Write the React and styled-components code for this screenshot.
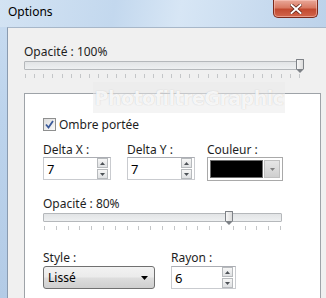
import React from 'react'
import styled, { createGlobalStyle } from 'styled-components'

const GlobalStyle = createGlobalStyle`
    body {
        margin: 0;
        background: #ffffff;
        font-family: "Noto Sans", "Open Sans", sans-serif;
        font-size: 12px;
        color: #1e1e1e;
    }
`

const Window = styled.div`
    position: relative;
    width: 326px;
    height: 298px;
    overflow: hidden;
    display: flex;
    flex-direction: column;
    background: linear-gradient(180deg, #c9dcf0 0%, #bcd3ec 40%, #b3cbe6 100%);
`

const TitleBar = styled.div`
    height: 27px;
    flex: none;
    display: flex;
    align-items: flex-start;
    justify-content: space-between;
    background: linear-gradient(100deg, #d3e3f3 0%, #c3d8ee 35%, #d7e6f5 55%, #bcd2ea 100%);
`

const Title = styled.span`
    padding: 4px 0 0 8px;
    font-size: 12px;
    line-height: 16px;
    color: #000;
`

const CloseButton = styled.div`
    width: 43px;
    height: 17px;
    margin-right: 8px;
    display: flex;
    align-items: center;
    justify-content: center;
    border: 1px solid #7b2a1c;
    border-top: none;
    border-radius: 0 0 5px 5px;
    background: linear-gradient(180deg, #e9a899 0%, #d97a63 45%, #c24a30 55%, #d2664c 100%);
    box-shadow: inset 0 0 0 1px rgba(255, 210, 200, 0.5);
`

const Frame = styled.div`
    flex: 1;
    display: flex;
    padding: 0 8px 0 7px;
`

const Client = styled.div`
    flex: 1;
    border-left: 1px solid #8a9bb0;
    border-top: 1px solid #a7b7c9;
    border-right: 1px solid #a7b7c9;
    background: #f0f0f0;
    padding: 16px 14px 0 16px;
    display: flex;
    flex-direction: column;
`

const Label = styled.div`
    font-size: 12px;
    line-height: 15px;
    height: 15px;
    color: #1e1e1e;
    white-space: nowrap;
    margin-top: ${(p) => p.$top || 0}px;
`

const SliderWrap = styled.div`
    position: relative;
    flex: none;
    width: ${(p) => p.$width}px;
    height: 22px;
`

const Track = styled.div`
    margin-top: 2px;
    height: 7px;
    border: 1px solid #b5b8bb;
    border-radius: 1px;
    background: linear-gradient(180deg, #e2e4e6 0%, #eef0f1 100%);
`

const Thumb = styled.div`
    position: absolute;
    top: 0;
    width: 6px;
    height: 9px;
    border: 1px solid #7e8287;
    border-bottom: none;
    border-radius: 1px 1px 0 0;
    background: linear-gradient(90deg, #f7f7f7, #dcdcdc);
    &::after {
        content: '';
        position: absolute;
        left: -1px;
        bottom: -4px;
        border-left: 4px solid transparent;
        border-right: 4px solid transparent;
        border-top: 4px solid #7e8287;
    }
`

const Ticks = styled.div`
    display: flex;
    justify-content: space-between;
    margin-top: 4px;
    padding: 0 1px;
`

const Tick = styled.span`
    width: 1px;
    height: 4px;
    background: #c4c6c8;
`

const Panel = styled.div`
    margin-top: 12px;
    width: 277px;
    flex: 1;
    border: 1px solid #9ea3a8;
    border-bottom: none;
    background: #ffffff;
    padding: 23px 0 0 18px;
    display: flex;
    flex-direction: column;
`

const CheckRow = styled.label`
    display: flex;
    align-items: center;
    gap: 3px;
    height: 14px;
`

const Box = styled.span`
    width: 11px;
    height: 11px;
    border: 1px solid #8e8f8f;
    background: linear-gradient(135deg, #dcdcdc, #fbfbfb);
    display: flex;
    align-items: center;
    justify-content: center;
`

const FieldRow = styled.div`
    display: flex;
    gap: ${(p) => p.$gap}px;
    margin-top: ${(p) => p.$top}px;
`

const Field = styled.div`
    display: flex;
    flex-direction: column;
    gap: ${(p) => p.$gap || 0}px;
    margin-left: ${(p) => p.$shift || 0}px;
`

const SpinBox = styled.div`
    width: ${(p) => p.$width}px;
    height: 23px;
    box-sizing: border-box;
    border: 1px solid #c9cbcf;
    border-top-color: #abadb3;
    background: #fff;
    display: flex;
    align-items: center;
    justify-content: space-between;
    padding: 0 2px 0 3px;
`

const SpinValue = styled.span`
    font-size: 13px;
    color: #000;
`

const SpinButtons = styled.div`
    display: flex;
    flex-direction: column;
    gap: 1px;
`

const SpinButton = styled.span`
    width: 9px;
    height: 8px;
    border: 1px solid #b7babd;
    background: linear-gradient(180deg, #f6f6f6, #dfe1e3);
    display: flex;
    align-items: center;
    justify-content: center;
`

const ColorPicker = styled.div`
    width: 76px;
    height: 24px;
    box-sizing: border-box;
    border: 1px solid #a9a9a9;
    padding: 2px;
    background: #fff;
    display: flex;
    gap: 1px;
`

const Swatch = styled.div`
    flex: 1;
    background: #000;
    border: 1px solid #6d6d6d;
`

const ColorArrow = styled.div`
    width: 14px;
    background: linear-gradient(180deg, #e6e6e6, #cfcfcf);
    border: 1px solid #c0c0c0;
    display: flex;
    align-items: center;
    justify-content: center;
`

const Select = styled.div`
    width: 112px;
    height: 23px;
    box-sizing: border-box;
    border: 1px solid #707070;
    border-radius: 3px;
    background: linear-gradient(180deg, #f2f2f2 0%, #ebebeb 48%, #dddddd 52%, #cfcfcf 100%);
    display: flex;
    align-items: center;
    justify-content: space-between;
    padding: 0 6px 0 4px;
    font-size: 12px;
    color: #000;
`

const Watermark = styled.div`
    position: absolute;
    left: 93px;
    top: 82px;
    width: 192px;
    height: 31px;
    background: rgba(235, 235, 235, 0.55);
    display: flex;
    align-items: center;
    justify-content: center;
    font-family: "DejaVu Sans", sans-serif;
    font-weight: bold;
    font-size: 19px;
    letter-spacing: -0.5px;
    color: rgba(255, 255, 255, 0.85);
    text-shadow: 0 0 1px rgba(150, 150, 150, 0.5);
`

const SpinUp = () => (
    <svg width="5" height="3" viewBox="0 0 5 3"><path d="M0 3 L2.5 0 L5 3 Z" fill="#4d5257" /></svg>
)

const SpinDown = () => (
    <svg width="5" height="3" viewBox="0 0 5 3"><path d="M0 0 L2.5 3 L5 0 Z" fill="#4d5257" /></svg>
)

const Spin = ({ width, value }) => (
    <SpinBox $width={width}>
        <SpinValue>{value}</SpinValue>
        <SpinButtons>
            <SpinButton><SpinUp /></SpinButton>
            <SpinButton><SpinDown /></SpinButton>
        </SpinButtons>
    </SpinBox>
)

const Slider = ({ width, pos, ticks }) => (
    <SliderWrap $width={width}>
        <Track />
        <Thumb style={{ left: pos }} />
        <Ticks>
            {Array.from({ length: ticks }).map((_, i) => <Tick key={i} />)}
        </Ticks>
    </SliderWrap>
)

export default function App() {
    return (
        <>
            <GlobalStyle />
            <Window>
                <TitleBar>
                    <Title>Options</Title>
                    <CloseButton>
                        <svg width="12" height="10" viewBox="0 0 12 10">
                            <path d="M1.5 1 L10.5 9 M10.5 1 L1.5 9" stroke="#5a1d12" strokeWidth="3.4" strokeLinecap="square" />
                            <path d="M1.5 1 L10.5 9 M10.5 1 L1.5 9" stroke="#ffffff" strokeWidth="2" strokeLinecap="square" />
                        </svg>
                    </CloseButton>
                </TitleBar>
                <Frame>
                    <Client>
                        <Label>Opacité : 100%</Label>
                        <Slider width={277} pos={272} ticks={31} />
                        <Panel>
                            <CheckRow>
                                <Box>
                                    <svg width="9" height="9" viewBox="0 0 9 9">
                                        <path d="M1 4.5 L3.5 7.5 L8 1" stroke="#3b5a9a" strokeWidth="1.8" fill="none" />
                                    </svg>
                                </Box>
                                <span>Ombre portée</span>
                            </CheckRow>
                            <FieldRow $gap={16} $top={11}>
                                <Field>
                                    <Label>Delta X :</Label>
                                    <Spin width={68} value="7" />
                                </Field>
                                <Field>
                                    <Label>Delta Y :</Label>
                                    <Spin width={68} value="7" />
                                </Field>
                                <Field $shift={-4}>
                                    <Label>Couleur :</Label>
                                    <ColorPicker>
                                        <Swatch />
                                        <ColorArrow>
                                            <svg width="5" height="3" viewBox="0 0 5 3"><path d="M0 0 L2.5 3 L5 0 Z" fill="#808080" /></svg>
                                        </ColorArrow>
                                    </ColorPicker>
                                </Field>
                            </FieldRow>
                            <Label $top={15}>Opacité : 80%</Label>
                            <Slider width={239} pos={182} ticks={21} />
                            <FieldRow $gap={16} $top={17}>
                                <Field $gap={1}>
                                    <Label>Style :</Label>
                                    <Select>
                                        <span>Lissé</span>
                                        <svg width="7" height="4" viewBox="0 0 7 4"><path d="M0 0 L3.5 4 L7 0 Z" fill="#000" /></svg>
                                    </Select>
                                </Field>
                                <Field $gap={1}>
                                    <Label>Rayon :</Label>
                                    <Spin width={65} value="6" />
                                </Field>
                            </FieldRow>
                        </Panel>
                    </Client>
                </Frame>
                <Watermark>PhotofiltreGraphic</Watermark>
            </Window>
        </>
    )
}
